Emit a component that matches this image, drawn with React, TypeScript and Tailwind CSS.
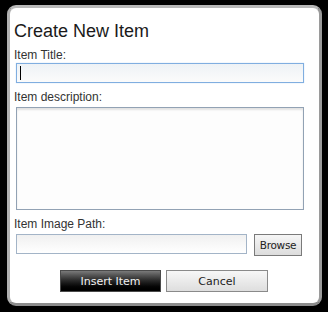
export default function App() {
  return (
    <div className="w-[328px] h-[312px] bg-black pt-[5px] pl-[7px]">
      {/* Dialog panel */}
      <div
        className="w-[315px] h-[301px] rounded-[9px] border-[3px] border-t-[#b8b8b8] border-l-[#b0b0b0] border-r-[#9a9a9a] border-b-[#8c8c8c] bg-white flex flex-col pt-[13px] text-[#222]"
        style={{ fontFamily: '"Liberation Sans", Arial, sans-serif' }}
      >
        <h1 className="pl-[4px] text-[18px] leading-[20px] text-[#1a1a1a]">Create New Item</h1>

        <label className="mt-[7px] pl-[4px] text-[12px] leading-[14px] text-[#333]">Item Title:</label>
        <div className="mt-[1px] ml-[6px] w-[288px] h-[20px] border border-[#80aee0] bg-gradient-to-b from-[#eef2f6] to-[#fbfbfb] flex items-center pl-[3px] shadow-[0_0_1px_#b8d4f2]">
          <span className="w-px h-[14px] bg-black" />
        </div>

        <label className="mt-[7px] pl-[4px] text-[12px] leading-[14px] text-[#333]">Item description:</label>
        <div className="mt-[3px] ml-[6px] w-[288px] h-[103px] border border-[#92a2b4] bg-[#fdfdfd] shadow-[inset_0_2px_2px_#e2e2e2]" />

        <label className="mt-[7px] pl-[4px] text-[12px] leading-[14px] text-[#333]">Item Image Path:</label>
        <div className="mt-[3px] ml-[6px] flex items-start gap-[7px]">
          <div className="w-[231px] h-[20px] border border-[#a3b4c7] bg-gradient-to-b from-[#f0f0f0] to-white" />
          <button
            className="w-[48px] h-[22px] border border-[#7a7a7a] bg-gradient-to-b from-[#f6f6f6] to-[#dcdcdc] text-[10.5px] tracking-[-0.3px] text-[#222] leading-none"
            style={{ fontFamily: '"DejaVu Sans", Tahoma, sans-serif' }}
          >
            Browse
          </button>
        </div>

        <div
          className="mt-[14px] flex justify-center gap-[5px] pr-[1px]"
          style={{ fontFamily: '"DejaVu Sans", Tahoma, sans-serif' }}
        >
          <button className="w-[101px] h-[22px] border border-[#4a4a4a] bg-gradient-to-b from-[#7a7a7a] via-[#262626] to-black text-[11px] text-[#f2f2f2] leading-none">
            Insert Item
          </button>
          <button className="w-[102px] h-[22px] border border-[#8a8a8a] bg-gradient-to-b from-[#f7f7f7] to-[#dedede] text-[11px] text-[#222] leading-none">
            Cancel
          </button>
        </div>
      </div>
    </div>
  );
}
